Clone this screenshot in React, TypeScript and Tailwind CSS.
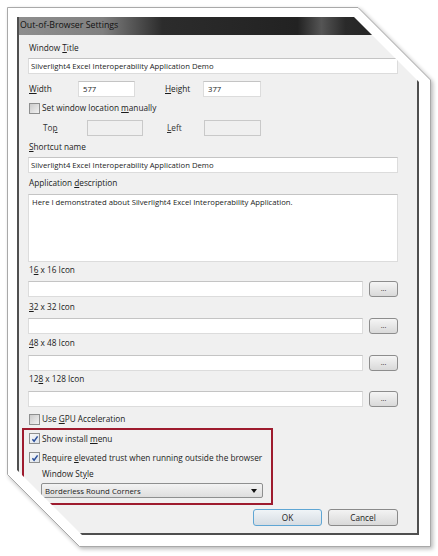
import React from "react";

function U({ children }: { children: React.ReactNode }) {
  return <span className="underline underline-offset-[1px] decoration-[0.5px]">{children}</span>;
}

function Box({ className = "", children }: { className?: string; children?: React.ReactNode }) {
  return (
    <div className={`h-[16px] shrink-0 bg-white border border-[#dcdcdc] border-t-[#c4c4c4] flex items-center pl-[2px] text-[7.7px] ${className}`}>
      {children}
    </div>
  );
}

function Check({ on = false }: { on?: boolean }) {
  return (
    <span
      className={`w-[11px] h-[11px] shrink-0 border border-[#8e8f8f] flex items-center justify-center ${
        on ? "bg-linear-to-br from-[#f7f7f7] to-[#dde4ec]" : "bg-linear-to-br from-[#cbcbcb] to-[#f2f2f2]"
      }`}
    >
      {on && (
        <svg width="8" height="8" viewBox="0 0 8 8">
          <path d="M1.4 4.3 L3.1 6.3 L6.6 1.4" stroke="#2a4e9a" strokeWidth="1.5" fill="none" />
        </svg>
      )}
    </span>
  );
}

function Dots() {
  return (
    <div className="w-[29px] h-[16px] ml-[6px] shrink-0 rounded-[3px] border border-[#8d8d8d] bg-linear-to-b from-[#f5f5f5] to-[#d9d9d9] flex items-center justify-center text-[7px] leading-none pb-[2px]">
      ...
    </div>
  );
}

export default function App() {
  return (
    <div className="relative w-[438px] h-[556px] bg-white overflow-hidden pl-[17px] pt-[17px] font-['Open_Sans','Noto_Sans',sans-serif] text-[8.25px] text-[#1b1b1b]">
      {/* paper frame with cut corners */}
      <svg className="absolute left-0 top-0" width="438" height="556">
        <defs>
          <filter id="sh" x="-10%" y="-10%" width="120%" height="120%">
            <feGaussianBlur stdDeviation="2" />
          </filter>
        </defs>
        <polygon points="9,9 360,9 433,82 433,549 81,549 9,477" fill="#000" opacity="0.28" filter="url(#sh)" />
        <polygon
          points="7.5,7.5 358,7.5 430.5,80 430.5,546.5 79.5,546.5 7.5,474.5"
          fill="#fff"
          stroke="#a9a9a9"
          strokeWidth="1"
        />
      </svg>

      {/* dialog */}
      <div className="relative w-[402px] h-[518px] flex flex-col bg-[#f0f0f0] border-x-2 border-b-2 border-[#4f4f4f] [clip-path:polygon(0_0,337px_0,402px_65px,402px_518px,65px_518px,0_453px)]">
        <div className="h-[18px] shrink-0 flex items-center pl-[1px] text-[8.8px] text-[#111] bg-[linear-gradient(to_right,#8e8e8e_0%,#808080_21%,#2c2c2c_36%,#222_70%,#555_76%,#2a2a2a_82%,#1c1c1c_100%)]">
          Out-of-Browser Settings
        </div>

        <div className="flex-1 flex flex-col pl-[9px] pr-[19px] leading-[12px]">
          <div className="h-[23px] pt-[7px] pl-[1px]">
            Window <U>T</U>itle
          </div>
          <Box>Silverlight4 Excel Interoperability Application Demo</Box>

          <div className="mt-[7px] h-[16px] flex items-center">
            <span className="w-[50px] pl-[1px]">
              <U>W</U>idth
            </span>
            <Box className="w-[57px] pl-[4px]">577</Box>
            <span className="w-[68px] pl-[30px]">
              <U>H</U>eight
            </span>
            <Box className="w-[58px] pl-[4px]">377</Box>
          </div>

          <div className="mt-[5px] h-[12px] flex items-center gap-[2px] pl-[1px]">
            <Check />
            <span>
              Set window location <U>m</U>anually
            </span>
          </div>

          <div className="mt-[6px] h-[16px] flex items-center text-[#333]">
            <span className="w-[59px] pl-[15px]">
              To<U>p</U>
            </span>
            <div className="w-[56px] h-[16px] border border-[#c9c9c9]" />
            <span className="w-[61px] pl-[24px]">
              <U>L</U>eft
            </span>
            <div className="w-[57px] h-[16px] border border-[#c9c9c9]" />
          </div>

          <div className="h-[21px] pt-[5px] pl-[1px]">
            <U>S</U>hortcut name
          </div>
          <Box>Silverlight4 Excel Interoperability Application Demo</Box>

          <div className="h-[21px] pt-[4px] pl-[1px]">
            Application <U>d</U>escription
          </div>
          <div className="h-[68px] shrink-0 bg-white border border-[#dcdcdc] border-t-[#c4c4c4] pt-[1px] pl-[3px] text-[7.7px]">
            Here I demonstrated about Silverlight4 Excel Interoperability Application.
          </div>

          <div className="h-[19px] pt-[2px] pl-[1px]">
            1<U>6</U> x 16 Icon
          </div>
          <div className="h-[16px] flex">
            <Box className="flex-1" />
            <Dots />
          </div>

          <div className="h-[21px] pt-[4px] pl-[1px]">
            <U>3</U>2 x 32 Icon
          </div>
          <div className="h-[16px] flex">
            <Box className="flex-1" />
            <Dots />
          </div>

          <div className="h-[21px] pt-[3px] pl-[1px]">
            <U>4</U>8 x 48 Icon
          </div>
          <div className="h-[16px] flex">
            <Box className="flex-1" />
            <Dots />
          </div>

          <div className="h-[20px] pt-[2px] pl-[1px]">
            12<U>8</U> x 128 Icon
          </div>
          <div className="h-[16px] flex">
            <Box className="flex-1" />
            <Dots />
          </div>

          <div className="mt-[6px] h-[12px] flex items-center gap-[2px] pl-[1px]">
            <Check />
            <span>
              Use <U>G</U>PU Acceleration
            </span>
          </div>

          {/* highlighted group */}
          <div className="mt-[3px] -ml-[6px] w-[251px] h-[77px] shrink-0 border-2 border-[#9e1b2e] pl-[5px] pt-[3px] flex flex-col">
            <div className="h-[11px] flex items-center gap-[2px]">
              <Check on />
              <span>
                Show install <U>m</U>enu
              </span>
            </div>
            <div className="mt-[8px] h-[11px] flex items-center gap-[2px]">
              <Check on />
              <span className="whitespace-nowrap">
                Require <U>e</U>levated trust when running outside the browser
              </span>
            </div>
            <div className="h-[20px] pt-[5px] pl-[13px]">
              Window St<U>y</U>le
            </div>
            <div className="ml-[12px] w-[222px] h-[15px] rounded-[2px] border border-[#8e8f8f] bg-linear-to-b from-[#f3f3f3] to-[#dedede] flex items-center justify-between pl-[3px] pr-[5px] text-[7.8px]">
              <span>Borderless Round Corners</span>
              <svg width="6" height="4" viewBox="0 0 6 4">
                <polygon points="0,0 6,0 3,4" fill="#111" />
              </svg>
            </div>
          </div>

          <div className="mt-[4px] h-[17px] flex justify-end gap-[6px]">
            <div className="w-[69px] h-[17px] rounded-[3px] border border-[#5fa6d4] bg-linear-to-b from-[#f0f4f7] to-[#d6dde3] flex items-center justify-center">
              OK
            </div>
            <div className="w-[70px] h-[17px] rounded-[3px] border border-[#8a8a8a] bg-linear-to-b from-[#f3f3f3] to-[#d9d9d9] flex items-center justify-center">
              Cancel
            </div>
          </div>
        </div>
      </div>
    </div>
  );
}
